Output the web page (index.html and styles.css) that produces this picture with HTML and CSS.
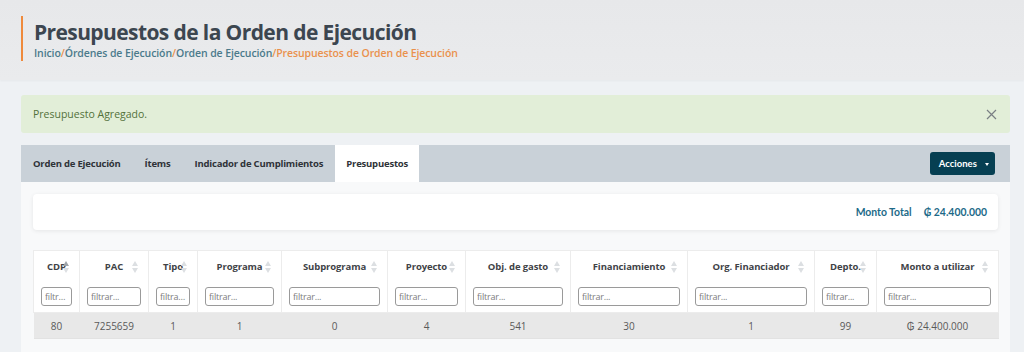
FILE: index.html
```html
<!DOCTYPE html>
<html lang="es">
<head>
    <meta charset="UTF-8">
    <meta name="viewport" content="width=device-width, initial-scale=1.0">
    <title>Presupuestos de la Orden de Ejecución</title>
    <link rel="stylesheet" href="styles.css">
</head>
<body>
    <header class="page-header">
        <div class="title-block">
            <h1>Presupuestos de la Orden de Ejecución</h1>
            <nav class="breadcrumb">
                <a href="#">Inicio</a><span class="sep">/</span><a href="#">Órdenes de Ejecución</a><span class="sep">/</span><a href="#">Orden de Ejecución</a><span class="sep">/</span><span class="current">Presupuestos de Orden de Ejecución</span>
            </nav>
        </div>
    </header>

    <main class="content">
        <!-- Alert -->
        <div class="alert">
            <span>Presupuesto Agregado.</span>
            <button class="alert-close" aria-label="Cerrar">
                <svg width="11" height="11" viewBox="0 0 11 11"><path d="M1 1L10 10M10 1L1 10" stroke="#7a7f84" stroke-width="1.2" fill="none"/></svg>
            </button>
        </div>

        <!-- Tabs -->
        <div class="tabs">
            <a class="tab" href="#">Orden de Ejecución</a>
            <a class="tab" href="#">Ítems</a>
            <a class="tab" href="#">Indicador de Cumplimientos</a>
            <a class="tab active" href="#">Presupuestos</a>
            <button class="btn-actions">Acciones <span class="caret"></span></button>
        </div>

        <div class="panel">
            <div class="total-card">
                <span>Monto Total</span>
                <span>₲ 24.400.000</span>
            </div>

            <table class="grid">
                <colgroup>
                    <col class="c-cdp"><col class="c-pac"><col class="c-tipo"><col class="c-prog">
                    <col class="c-subprog"><col class="c-proy"><col class="c-obj"><col class="c-fin">
                    <col class="c-org"><col class="c-depto"><col class="c-monto">
                </colgroup>
                <thead>
                    <tr>
                        <th><div class="th-inner sorted">CDP</div><input placeholder="filtrar..."></th>
                        <th><div class="th-inner">PAC</div><input placeholder="filtrar..."></th>
                        <th><div class="th-inner">Tipo</div><input placeholder="filtrar..."></th>
                        <th><div class="th-inner">Programa</div><input placeholder="filtrar..."></th>
                        <th><div class="th-inner">Subprograma</div><input placeholder="filtrar..."></th>
                        <th><div class="th-inner">Proyecto</div><input placeholder="filtrar..."></th>
                        <th><div class="th-inner">Obj. de gasto</div><input placeholder="filtrar..."></th>
                        <th><div class="th-inner">Financiamiento</div><input placeholder="filtrar..."></th>
                        <th><div class="th-inner">Org. Financiador</div><input placeholder="filtrar..."></th>
                        <th><div class="th-inner">Depto.</div><input placeholder="filtrar..."></th>
                        <th><div class="th-inner">Monto a utilizar</div><input placeholder="filtrar..."></th>
                    </tr>
                </thead>
                <tbody>
                    <tr>
                        <td>80</td><td>7255659</td><td>1</td><td>1</td><td>0</td><td>4</td>
                        <td>541</td><td>30</td><td>1</td><td>99</td><td>₲ 24.400.000</td>
                    </tr>
                </tbody>
            </table>
        </div>
    </main>
</body>
</html>
```

FILE: styles.css
```css
body {
    margin: 0;
    font-family: "Open Sans", Arial, sans-serif;
    background: #eef1f4;
    color: #333;
    height: 352px;
    overflow: hidden;
}
.page-header {
    background: linear-gradient(#e7e8ea, #eaebed);
    height: 80px;
    padding: 16px 21px 0;
    box-sizing: border-box;
    box-shadow: 0 1px 2px rgba(0, 0, 0, 0.04);
}
.title-block {
    border-left: 2px solid #ef8a3c;
    padding-left: 11px;
    height: 45px;
}
.title-block h1 {
    margin: 0;
    padding-top: 3px;
    font-size: 21px;
    font-weight: 700;
    color: #3c4650;
    line-height: 27px;
    letter-spacing: -0.6px;
}
.breadcrumb {
    font-size: 10.5px;
    font-weight: 600;
    line-height: 14px;
    letter-spacing: -0.1px;
}
.breadcrumb a {
    color: #4b7a8b;
    text-decoration: none;
}
.breadcrumb .sep,
.breadcrumb .current {
    color: #ea914c;
}
.content {
    padding: 15px 14px 0 21px;
}
.alert {
    display: flex;
    justify-content: space-between;
    align-items: center;
    height: 38px;
    padding: 0 12px;
    background: #e2eed8;
    border-radius: 3px;
    color: #52713a;
    font-size: 10.5px;
    box-sizing: border-box;
}
.alert-close {
    background: none;
    border: none;
    padding: 0;
    margin-right: 1px;
    display: flex;
    cursor: pointer;
}
.tabs {
    display: flex;
    align-items: stretch;
    height: 37px;
    margin-top: 12px;
    background: #c9d1d8;
}
.tab {
    display: flex;
    align-items: center;
    padding: 0 12px;
    font-size: 9.5px;
    font-weight: 700;
    color: #2f3338;
    text-decoration: none;
    letter-spacing: -0.2px;
}
.tab.active {
    background: #fff;
    padding: 0 11px;
}
.btn-actions {
    margin: 7px 15px 7px auto;
    width: 65px;
    background: #063f52;
    color: #fff;
    border: none;
    border-radius: 3px;
    font-family: Lato, sans-serif;
    font-weight: 700;
    font-size: 9.5px;
    cursor: pointer;
    padding: 0 0 0 3px;
}
.caret {
    display: inline-block;
    margin-left: 6px;
    vertical-align: middle;
    border-left: 2.5px solid transparent;
    border-right: 2.5px solid transparent;
    border-top: 3px solid #fff;
}
.panel {
    background: #f8f9fa;
    padding: 12px 12px 0;
    height: 170px;
    box-sizing: border-box;
}
.total-card {
    display: flex;
    justify-content: flex-end;
    align-items: center;
    gap: 12px;
    height: 36px;
    padding-right: 11px;
    background: #fff;
    border-radius: 4px;
    box-shadow: 0 1px 4px rgba(0, 0, 0, 0.08);
    font-family: Lato, sans-serif;
    font-weight: 700;
    font-size: 10.4px;
    color: #1d6a88;
}
.grid {
    margin-top: 20px;
    width: 965px;
    border-collapse: collapse;
    table-layout: fixed;
    font-size: 10px;
}
.c-cdp { width: 46px; }
.c-pac { width: 69px; }
.c-tipo { width: 49px; }
.c-prog { width: 84px; }
.c-subprog { width: 106px; }
.c-proy { width: 78px; }
.c-obj { width: 105px; }
.c-fin { width: 117px; }
.c-org { width: 127px; }
.c-depto { width: 62px; }
.c-monto { width: 122px; }
.grid th {
    position: relative;
    background: #fff;
    border: 1px solid #ececec;
    padding: 0 7px 6px;
    height: 62px;
    box-sizing: border-box;
    vertical-align: top;
    font-size: 9.5px;
    font-weight: 700;
    color: #3f4347;
    letter-spacing: -0.1px;
}
.th-inner {
    height: 36px;
    line-height: 32px;
    text-align: center;
    white-space: nowrap;
}
.th-inner::before,
.th-inner::after {
    content: "";
    position: absolute;
    right: 10px;
    border-left: 3.5px solid transparent;
    border-right: 3.5px solid transparent;
}
.th-inner::before {
    top: 10px;
    border-bottom: 5px solid #dcdfe2;
}
.th-inner::after {
    top: 17px;
    border-top: 5px solid #dcdfe2;
}
.th-inner.sorted::before {
    border-bottom-color: #9ea3a8;
}
.grid input {
    display: block;
    width: 100%;
    height: 19px;
    box-sizing: border-box;
    border: 1px solid #9a9a9a;
    border-radius: 3px;
    padding: 0 3px;
    font-family: "Open Sans", sans-serif;
    font-size: 9px;
    letter-spacing: -0.2px;
    background: #fff;
    text-overflow: ellipsis;
}
.grid input::placeholder {
    color: #7d7d7d;
}
.grid td {
    background: #e8e8e8;
    height: 25px;
    padding: 0;
    text-align: center;
    color: #5a5a5a;
    border-bottom: 1px solid #e2e2e2;
}
```
